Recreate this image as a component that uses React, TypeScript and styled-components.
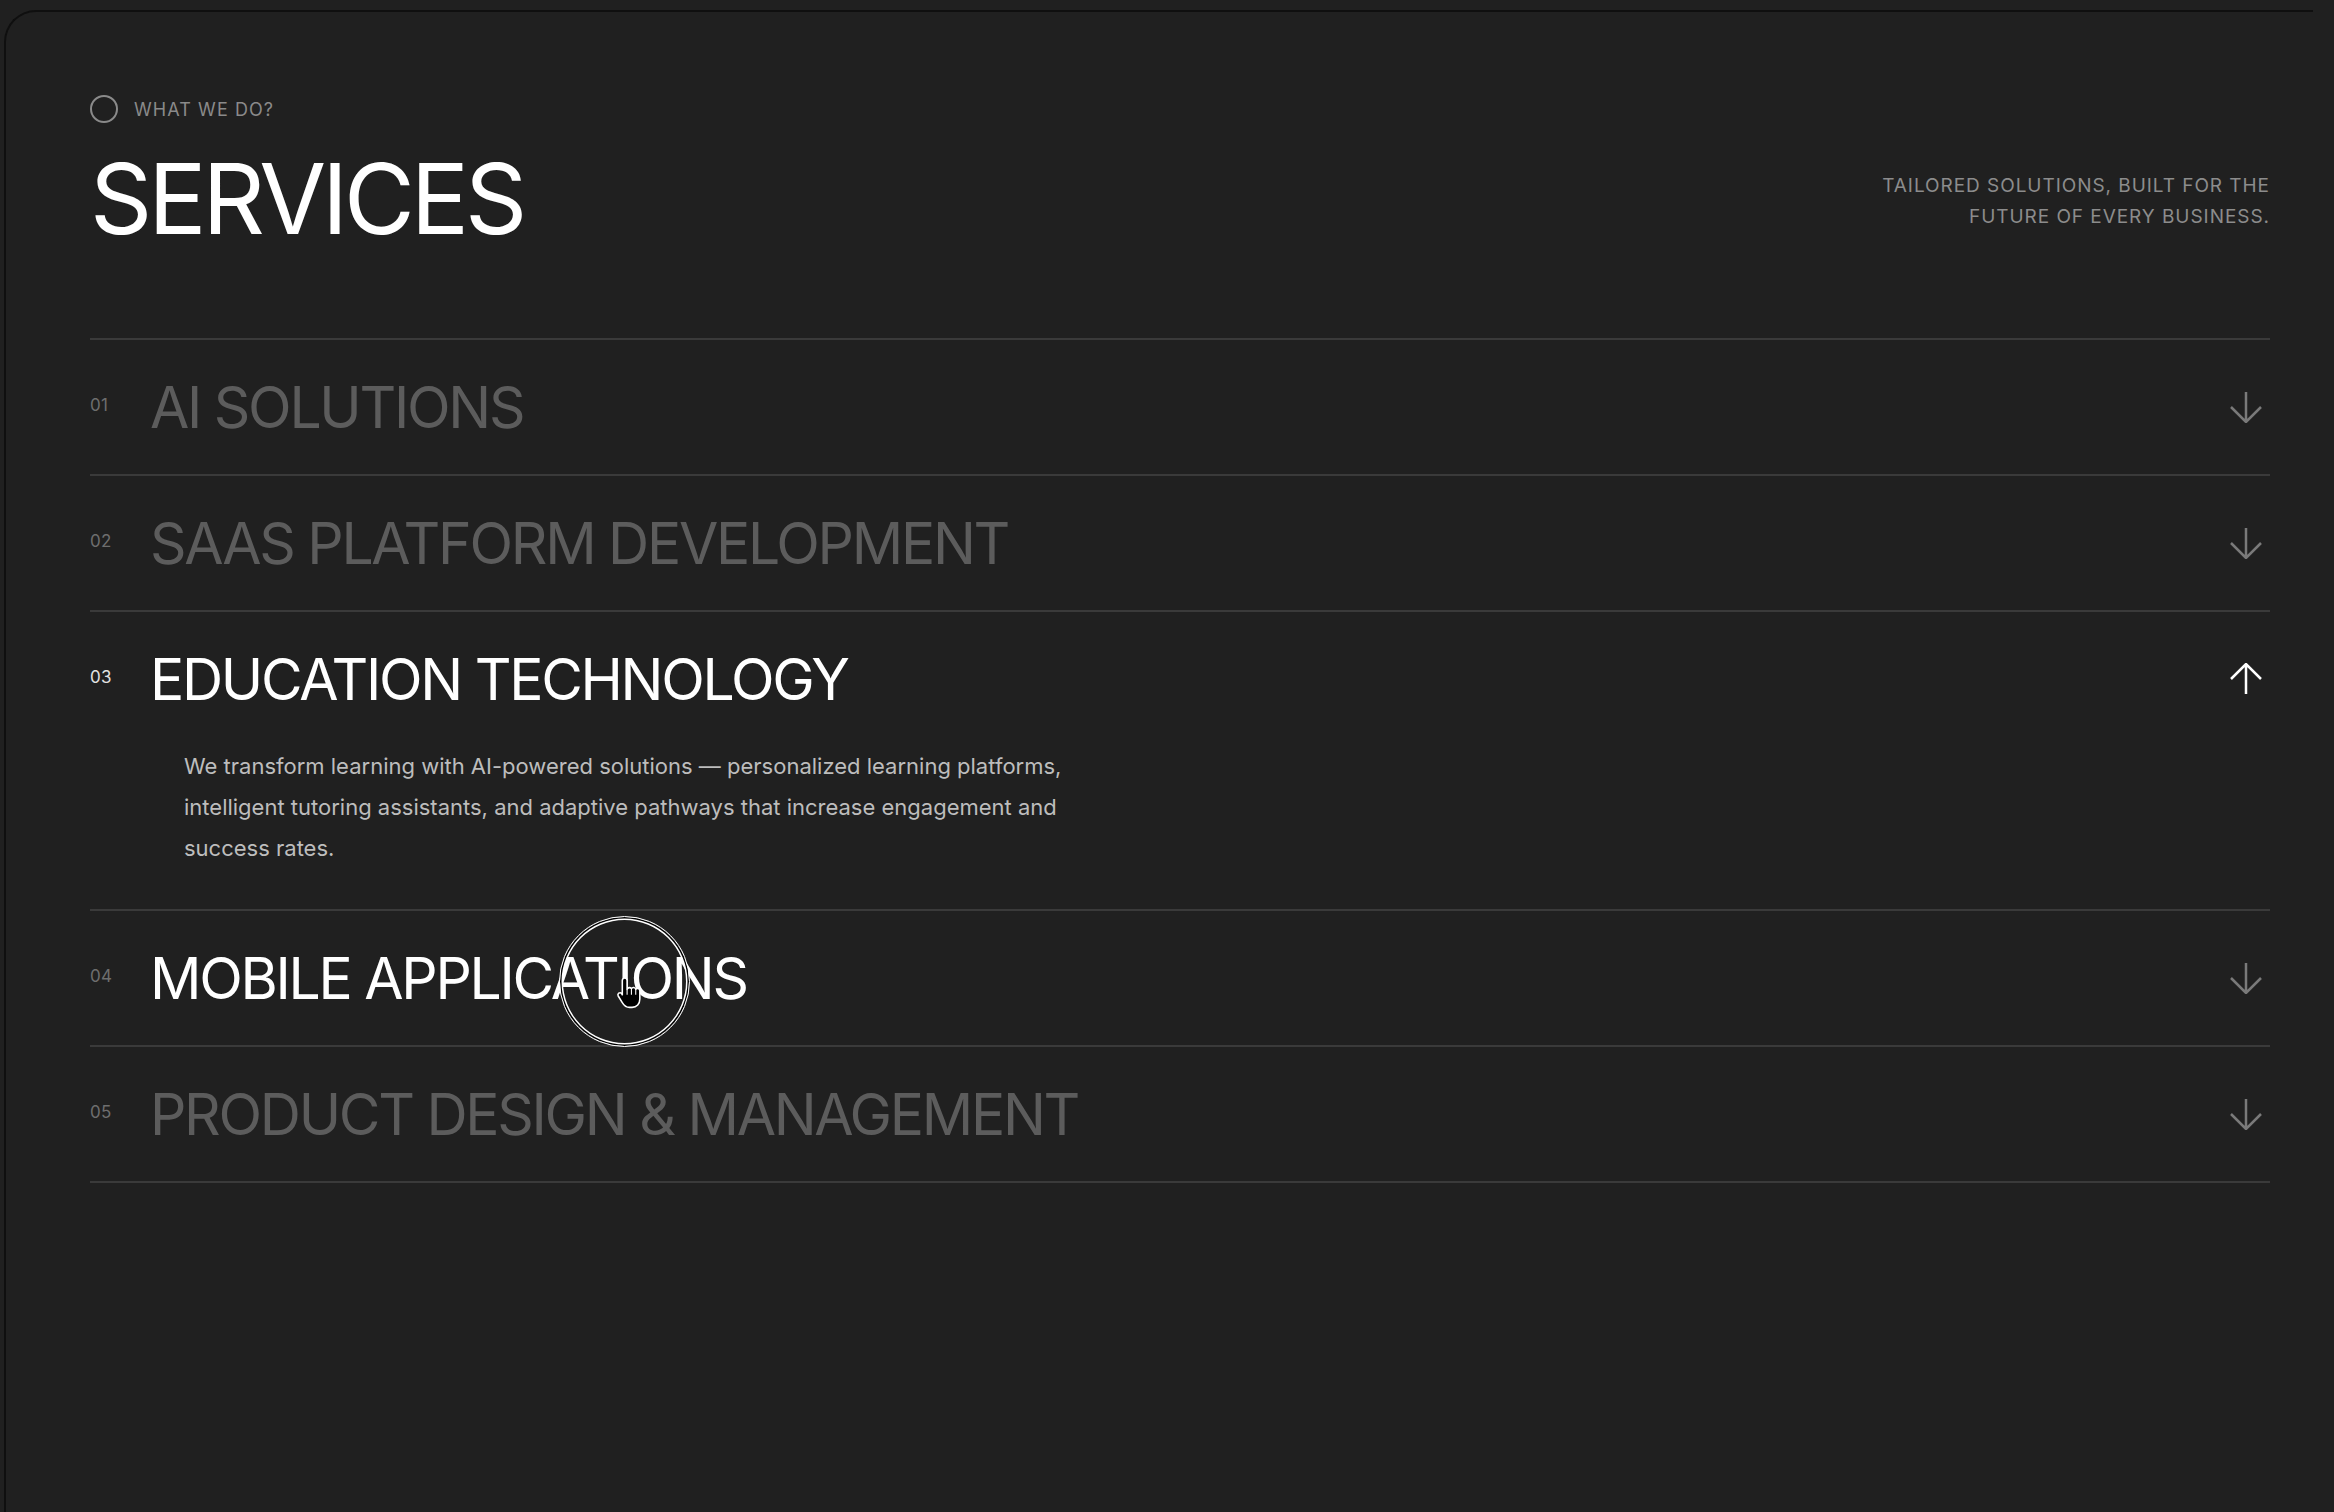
import React from 'react'
import styled, { createGlobalStyle } from 'styled-components'

const GlobalStyle = createGlobalStyle`
  html, body {
    margin: 0;
    padding: 0;
    background: #202020;
  }
  body {
    font-family: Inter, "Liberation Sans", Arial, sans-serif;
    -webkit-font-smoothing: antialiased;
  }
`

const Frame = styled.main`
  box-sizing: border-box;
  height: 1502px;
  margin: 10px 21px 0 4px;
  padding: 83px 43px 0 84px;
  border-top: 2px solid #0f0f0f;
  border-left: 2px solid #0f0f0f;
  border-top-left-radius: 32px;
  background: #202020;
`

const Header = styled.header`
  display: flex;
  justify-content: space-between;
  align-items: flex-start;
  margin-bottom: 91px;
`

const Eyebrow = styled.div`
  display: flex;
  align-items: center;
  gap: 16px;
  height: 28px;
  margin-bottom: 27px;
  color: #8a8a8a;
  font-size: 18px;
  letter-spacing: 0.06em;
  text-transform: uppercase;
`

const EyebrowDot = styled.span`
  box-sizing: border-box;
  width: 28px;
  height: 28px;
  border: 2px solid #8a8a8a;
  border-radius: 50%;
`

const Title = styled.h1`
  margin: 0;
  color: #ffffff;
  font-size: 97px;
  font-weight: 400;
  line-height: 1;
  letter-spacing: -0.042em;
`

const Tagline = styled.p`
  margin: 75px 0 0;
  color: #8c8c8c;
  font-size: 19px;
  line-height: 31px;
  letter-spacing: 0.05em;
  text-align: right;
  text-transform: uppercase;
`

const List = styled.ul`
  list-style: none;
  margin: 0;
  padding: 0;
  border-bottom: 2px solid #3a3a3a;
`

const Row = styled.li`
  border-top: 2px solid #3a3a3a;
`

const RowHead = styled.div`
  display: flex;
  align-items: center;
  height: 134px;
`

const Num = styled.span<{ $on: boolean }>`
  flex: 0 0 60px;
  padding-bottom: 4px;
  color: ${(p) => (p.$on ? '#e2e2e2' : '#6e6e6e')};
  font-size: 17px;
  letter-spacing: 0.02em;
`

const RowTitle = styled.h2<{ $lit: boolean }>`
  flex: 1;
  margin: 0;
  color: ${(p) => (p.$lit ? '#ffffff' : '#5c5c5c')};
  font-size: 57px;
  font-weight: 400;
  line-height: 1;
  letter-spacing: -0.04em;
  text-transform: uppercase;
`

const ArrowIcon = styled.svg<{ $on: boolean }>`
  flex: 0 0 32px;
  width: 32px;
  height: 32px;
  margin-right: 8px;
  color: ${(p) => (p.$on ? '#ffffff' : '#7a7a7a')};
`

const Description = styled.p`
  max-width: 900px;
  margin: 0 0 0 94px;
  padding-bottom: 40px;
  color: #bdbdbd;
  font-size: 22px;
  line-height: 41px;
`

const CursorRing = styled.div`
  position: fixed;
  left: 559px;
  top: 916px;
  box-sizing: border-box;
  width: 131px;
  height: 131px;
  border: 1.5px solid #ffffff;
  border-radius: 50%;
  box-shadow: inset 0 0 0 1.5px #000000, inset 0 0 0 3px #ffffff;
  pointer-events: none;
`

const Hand = styled.svg`
  position: fixed;
  left: 615px;
  top: 975px;
  width: 29px;
  height: 36px;
  pointer-events: none;
`

type Service = { id: string; title: string; text?: string }

const services: Service[] = [
  { id: '01', title: 'AI Solutions' },
  { id: '02', title: 'SaaS Platform Development' },
  {
    id: '03',
    title: 'Education Technology',
    text:
      'We transform learning with AI-powered solutions — personalized learning platforms, intelligent tutoring assistants, and adaptive pathways that increase engagement and success rates.',
  },
  { id: '04', title: 'Mobile Applications' },
  { id: '05', title: 'Product Design & Management' },
]

const openId = '03'
const hoverId = '04'

function Arrow({ up, on }: { up: boolean; on: boolean }) {
  return (
    <ArrowIcon $on={on} viewBox="0 0 32 32" fill="none" stroke="currentColor" strokeWidth="2.5">
      {up ? <path d="M16 31V1M1 16 16 1l15 15" /> : <path d="M16 1v30M1 16l15 15 15-15" />}
    </ArrowIcon>
  )
}

export default function App() {
  return (
    <>
      <GlobalStyle />
      <Frame>
        <Header>
          <div>
            <Eyebrow>
              <EyebrowDot />
              What we do?
            </Eyebrow>
            <Title>SERVICES</Title>
          </div>
          <Tagline>
            Tailored solutions, built for the
            <br />
            future of every business.
          </Tagline>
        </Header>

        <List>
          {services.map((s) => {
            const open = s.id === openId
            return (
              <Row key={s.id}>
                <RowHead>
                  <Num $on={open}>{s.id}</Num>
                  <RowTitle $lit={open || s.id === hoverId}>{s.title}</RowTitle>
                  <Arrow up={open} on={open} />
                </RowHead>
                {open && s.text && <Description>{s.text}</Description>}
              </Row>
            )
          })}
        </List>
      </Frame>

      {/* custom cursor over the hovered row */}
      <CursorRing />
      <Hand viewBox="0 0 24 30">
        <path
          d="M6 4.5a2 2 0 0 1 4 0V12a2 2 0 0 1 3.6-.6 2 2 0 0 1 3.6.4 2 2 0 0 1 3.4 1.2V20c0 4-2.5 7-6.5 7H12c-3 0-4.5-1.5-6-4l-3.4-5.5a1.8 1.8 0 0 1 2.8-2.2L6 16.5Z"
          fill="#000"
          stroke="#fff"
          strokeWidth="1.3"
          strokeLinejoin="round"
        />
        <path d="M10 12v4.5M13.6 11.4v5M17.2 11.8v4.7" stroke="#fff" strokeWidth="0.9" />
      </Hand>
    </>
  )
}
